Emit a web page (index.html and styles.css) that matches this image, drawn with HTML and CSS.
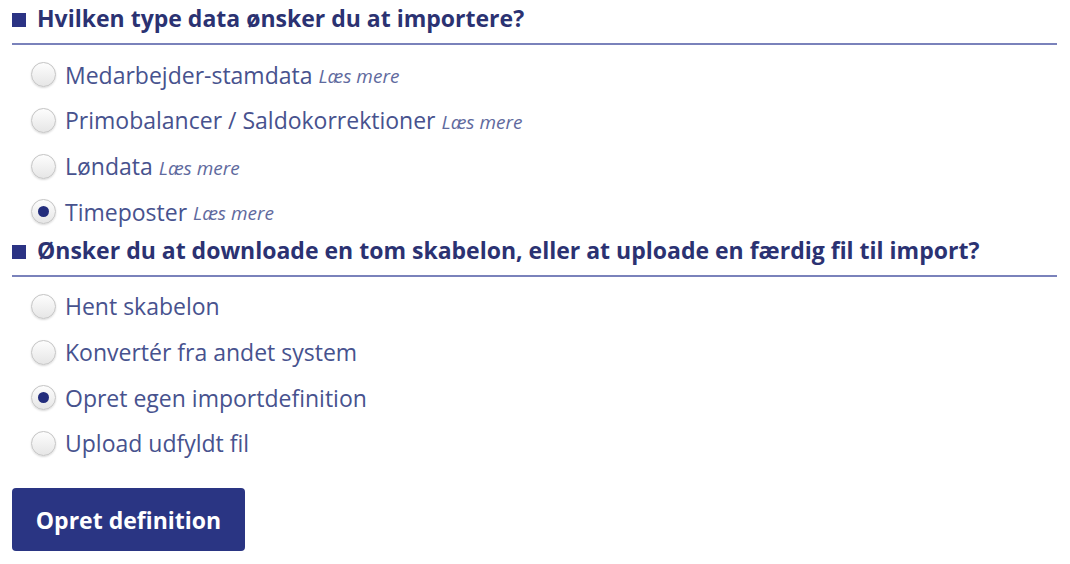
FILE: index.html
```html
<!DOCTYPE html>
<html lang="da">

<head>
  <meta charset="UTF-8">
  <meta name="viewport" content="width=device-width, initial-scale=1.0">
  <title>Import</title>
  <link rel="stylesheet" href="styles.css">
</head>

<body>
  <div class="page">
    <div class="section first">
      <h2 class="title"><span class="mark"></span>Hvilken type data ønsker du at importere?</h2>
      <div class="options">
        <label class="option"><input type="radio" name="type"> Medarbejder-stamdata <a class="more" href="#">Læs mere</a></label>
        <label class="option"><input type="radio" name="type"> Primobalancer / Saldokorrektioner <a class="more" href="#">Læs mere</a></label>
        <label class="option"><input type="radio" name="type"> Løndata <a class="more" href="#">Læs mere</a></label>
        <label class="option"><input type="radio" name="type" checked> Timeposter <a class="more" href="#">Læs mere</a></label>
      </div>
    </div>
    <div class="section">
      <h2 class="title"><span class="mark"></span>Ønsker du at downloade en tom skabelon, eller at uploade en færdig fil til import?</h2>
      <div class="options">
        <label class="option"><input type="radio" name="mode"> Hent skabelon</label>
        <label class="option"><input type="radio" name="mode"> Konvertér fra andet system</label>
        <label class="option"><input type="radio" name="mode" checked> Opret egen importdefinition</label>
        <label class="option"><input type="radio" name="mode"> Upload udfyldt fil</label>
      </div>
    </div>
    <button class="btn">Opret definition</button>
  </div>
</body>

</html>
```

FILE: styles.css
```css
body {
  margin: 0;
  padding: 0;
  font-family: 'Open Sans', sans-serif;
  background-color: #fff;
}

.page {
  width: 1045px;
  padding-left: 12px;
}

.first {
  padding-top: 3px;
}

.title {
  display: flex;
  align-items: center;
  margin: 0;
  height: 30px;
  padding-bottom: 10px;
  border-bottom: 2px solid #7a82bb;
  font-size: 23px;
  font-weight: 700;
  color: #2b3272;
  white-space: nowrap;
}

.mark {
  display: inline-block;
  width: 14px;
  height: 14px;
  margin-right: 11px;
  margin-top: 4px;
  background-color: #2b3384;
}

.options {
  display: flex;
  flex-direction: column;
  padding: 7px 0 0 18px;
}

.option {
  display: flex;
  align-items: center;
  height: 45.67px;
  font-size: 23px;
  color: #47528e;
  cursor: pointer;
}

.option input {
  appearance: none;
  -webkit-appearance: none;
  width: 25px;
  height: 25px;
  margin: 0 9px 0 1px;
  border-radius: 50%;
  border: 1px solid #c4c4c4;
  background: linear-gradient(#fdfdfd, #e6e6e6);
  box-shadow: 0 1px 2px rgba(0, 0, 0, 0.15);
  position: relative;
}

.option input:checked::after {
  content: "";
  position: absolute;
  left: 6px;
  top: 6px;
  width: 11px;
  height: 11px;
  border-radius: 50%;
  background-color: #232d7c;
}

.more {
  margin-left: 6px;
  font-size: 19px;
  font-style: italic;
  color: #5f6a9e;
  text-decoration: none;
  margin-top: 3px;
}

.btn {
  margin-top: 22px;
  width: 233px;
  height: 63px;
  border: none;
  border-radius: 4px;
  background-color: #2a3583;
  color: #fff;
  font-family: 'Open Sans', sans-serif;
  font-size: 23px;
  font-weight: 700;
  cursor: pointer;
}

.btn:hover {
  opacity: 0.9;
}
```
